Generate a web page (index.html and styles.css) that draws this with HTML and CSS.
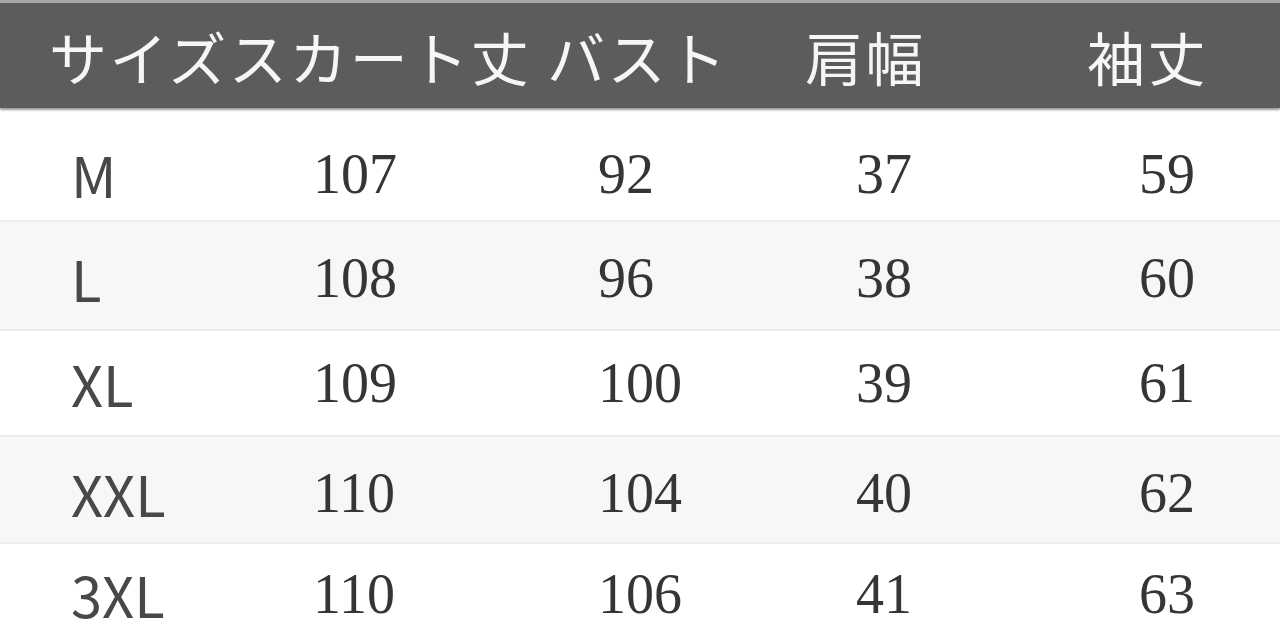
FILE: index.html
```html
<!DOCTYPE html>
<html lang="ja">
<head>
<meta charset="utf-8">
<title>サイズ表</title>
<link rel="stylesheet" href="styles.css">
</head>
<body>
<div class="table">
  <div class="head">
    <span>サイズスカート丈</span>
    <span>バスト</span>
    <span>肩幅</span>
    <span>袖丈</span>
  </div>
  <div class="row r1">
    <span class="size">M</span><span class="num">107</span><span class="num">92</span><span class="num">37</span><span class="num">59</span>
  </div>
  <div class="row r2 alt">
    <span class="size">L</span><span class="num">108</span><span class="num">96</span><span class="num">38</span><span class="num">60</span>
  </div>
  <div class="row r3">
    <span class="size">XL</span><span class="num">109</span><span class="num">100</span><span class="num">39</span><span class="num">61</span>
  </div>
  <div class="row r4 alt">
    <span class="size">XXL</span><span class="num">110</span><span class="num">104</span><span class="num">40</span><span class="num">62</span>
  </div>
  <div class="row r5">
    <span class="size">3XL</span><span class="num">110</span><span class="num">106</span><span class="num">41</span><span class="num">63</span>
  </div>
</div>
</body>
</html>
```
FILE: styles.css
```css
html, body {
  margin: 0;
  padding: 0;
  background: #ffffff;
}
body {
  width: 1280px;
  height: 643px;
  overflow: hidden;
}
.table {
  display: flex;
  flex-direction: column;
}
.head {
  height: 105px;
  border-top: 3px solid #a9a9a9;
  background: #5c5c5c;
  box-shadow: 0 2px 2px #9a9a9a;
  display: grid;
  grid-template-columns: 498px 258px 282px auto;
  align-items: center;
  padding-left: 49px;
  color: #f6f6f6;
  font-family: "Noto Sans CJK JP", "Noto Sans", sans-serif;
  font-size: 58px;
  line-height: 58px;
  letter-spacing: 2.5px;
}
.row {
  display: grid;
  grid-template-columns: 242px 285px 258px 283px auto;
  align-items: center;
  padding-left: 71px;
  box-sizing: border-box;
  color: #3a3a3a;
}
.row + .row {
  border-top: 2px solid #ececec;
}
.alt {
  background: #f7f7f7;
}
.r1 { height: 112px; padding-top: 20px; }
.r2 { height: 109px; padding-top: 4px; }
.r3 { height: 106px; }
.r4 { height: 107px; padding-top: 6px; }
.r5 { height: 100px; padding-top: 2px; }
.size {
  font-family: "Noto Sans CJK JP", "Noto Sans", sans-serif;
  font-size: 56px;
  line-height: 56px;
  color: #484848;
}
.num {
  font-family: "Liberation Serif", serif;
  font-size: 56px;
  line-height: 56px;
  color: #353535;
}
```
